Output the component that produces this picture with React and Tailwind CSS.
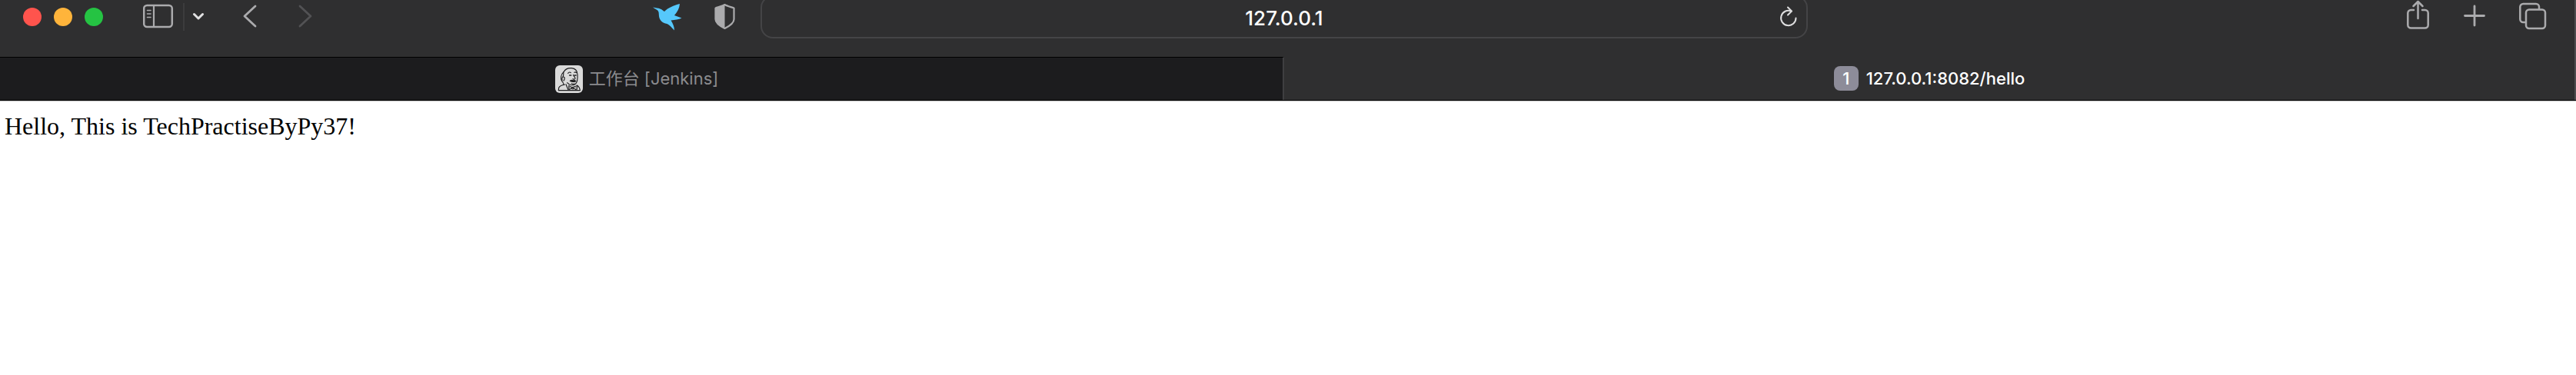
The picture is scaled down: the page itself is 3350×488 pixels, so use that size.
import React, { useState } from "react";

const iconColor = "text-[#ababad]";

function SidebarIcon() {
  return (
    <svg width="40" height="44" viewBox="0 0 40 44" fill="none" stroke="currentColor" strokeLinecap="round">
      <rect x="1.200" y="7" width="36.600" height="28" rx="4" strokeWidth="2.500" />
      <path d="M14 7v28" strokeWidth="2.200" />
      <path d="M5.500 13.500h4.500M5.500 18h4.500M5.500 22.500h4.500" strokeWidth="1.600" />
    </svg>
  );
}

function ShareIcon() {
  return (
    <svg width="30" height="44" viewBox="0 0 30 44" fill="none" stroke="currentColor" strokeWidth="2.500" strokeLinecap="round" strokeLinejoin="round">
      <path d="M9 13H5.300a4 4 0 0 0-4 4v15.500a4 4 0 0 0 4 4h18.400a4 4 0 0 0 4-4V17a4 4 0 0 0-4-4H20" />
      <path d="M14.500 24V2.500M8.500 8l6-6 6 6" />
    </svg>
  );
}

function TabsIcon() {
  return (
    <svg width="36" height="44" viewBox="0 0 36 44" fill="none" stroke="currentColor" strokeWidth="2.500">
      <rect x="9" y="12.500" width="25" height="24.500" rx="4" />
      <path d="M9 29H5.300a4 4 0 0 1-4-4V9a4 4 0 0 1 4-4h16.700a4 4 0 0 1 4 4v3.500" />
    </svg>
  );
}

function BirdIcon() {
  return (
    <svg width="38" height="44" viewBox="0 0 38 44" fill="#56c8fb">
      <path d="M0 9.500c4 1 7 .8 9.500 2 2.500 1 4 2.800 5.500 3.500C20 10 27 7 35 5c-.5 6-3 10.500-7 15l9.500 3.500c-4 2-8.500 2.500-14 3 2.500 4 4.500 8 4.500 13-3.500-3.500-6-7-9.500-8.500-6.500-1-10-5-10.500-10-.3-3 0-5.500-1.500-7.200C4.800 12 2.500 11.500 0 9.500z" />
    </svg>
  );
}

function ShieldIcon() {
  return (
    <svg width="28" height="44" viewBox="0 0 28 44">
      <path d="M13.500 6C10.500 8 6 9 1.500 10.500V25c0 5.500 6 9 12 12 6-3 12-6.500 12-12V10.500C21.500 9 16.500 8 13.500 6z" fill="none" stroke="currentColor" strokeWidth="2.200" strokeLinejoin="round" />
      <path d="M13.500 6C10.500 8 6 9 1.500 10.500V25c0 5.500 6 9 12 12z" fill="currentColor" />
    </svg>
  );
}

function JenkinsIcon() {
  return (
    <svg width="36" height="36" viewBox="0 0 108 108" fill="none" stroke="#1d1d1f" strokeWidth="3.500" strokeLinecap="round" strokeLinejoin="round">
      <rect width="108" height="108" rx="18" fill="#dadada" stroke="none" />
      <path d="M34 76c-2-8-4-11-8-15-6-10-4-25 7-35 6-11 17-16 31-15 15 1 22 11 23 25 1 16 1 27-7 36-9 8-24 7-33-4" />
      <path d="M33 26c-2 8 1 13-3 19M27 58c-1-8 0-13 5-13 7 0 5 11 1 15" />
      <path d="M50 31c4-5 8-5 11-2M75 28c3-2 6-1 8 1M71 37c1 7 9 11 7 15-1 3-6 3-9 1" />
      <path d="M56 39h6M76 39h5" strokeWidth="5" />
      <path d="M58 61c4-4 9-4 12-1 4-2 8-1 10 2-6 3-15 3-22-1z" fill="#1d1d1f" />
      <path d="M64 71c4 2 8 2 11 1M37 75c-11 2-20 6-23 13l-1 10h84c-1-9-4-15-12-20M42 74l9 22" />
      <path d="M53 80l1 16 13-8 17 9 3-18-20 7z" fill="#a5a5a5" strokeWidth="3" />
      <path d="M66 85l6 1-1 7-6-1z" strokeWidth="3" />
    </svg>
  );
}

export default function App() {
  const [address, setAddress] = useState("127.0.0.1");

  return (
    <div className="min-h-screen bg-white">
      <header className="overflow-hidden border-b border-black bg-[#2f2f30] font-['Inter','Noto_Sans_CJK_SC',sans-serif]">
        <div className="border-r-2 border-[#4c4c4e]">
          {/* Toolbar */}
          <div className={`grid h-[74px] grid-cols-[989fr_1362fr_997fr] items-start ${iconColor}`}>
            <div className="flex h-11 items-center pl-[30px] pr-8">
              <div className="flex gap-4">
                <button aria-label="Close" className="size-6 rounded-full bg-[#ff544d]" />
                <button aria-label="Minimize" className="size-6 rounded-full bg-[#ffb43b]" />
                <button aria-label="Zoom" className="size-6 rounded-full bg-[#25c343]" />
              </div>
              <button aria-label="Sidebar" className="ml-[52px]">
                <SidebarIcon />
              </button>
              <span className="ml-3 h-9 w-[2px] bg-[#3c3c3d]" />
              <button aria-label="Tab groups" className="ml-2 text-[#e2e2e3]">
                <svg width="20" height="44" viewBox="0 0 20 44" fill="none" stroke="currentColor" strokeWidth="3" strokeLinecap="round" strokeLinejoin="round">
                  <path d="M4.500 18.500l5.500 5.500 5.500-5.500" />
                </svg>
              </button>
              <button aria-label="Back" className="ml-12">
                <svg width="20" height="44" viewBox="0 0 20 44" fill="none" stroke="currentColor" strokeWidth="2.800" strokeLinecap="round" strokeLinejoin="round">
                  <path d="M16 8L2 21l14 13" />
                </svg>
              </button>
              <button aria-label="Forward" disabled className="ml-[52px] text-[#525254]">
                <svg width="20" height="44" viewBox="0 0 20 44" fill="none" stroke="currentColor" strokeWidth="2.800" strokeLinecap="round" strokeLinejoin="round">
                  <path d="M2 8l14 13L2 34" />
                </svg>
              </button>
              <button aria-label="Bird extension" className="ml-auto">
                <BirdIcon />
              </button>
              <button aria-label="Privacy report" className="ml-[42px]">
                <ShieldIcon />
              </button>
            </div>

            <div className="-mt-[6px] flex h-14 items-center rounded-2xl border-2 border-[#444446] pr-2">
              <input
                aria-label="Address"
                value={address}
                onChange={(e) => setAddress(e.target.value)}
                className="h-full min-w-0 flex-1 bg-transparent pt-[2px] pl-9 text-center text-[26px] font-medium text-white outline-none"
              />
              <button aria-label="Reload" className="text-[#dededf]">
                <svg width="28" height="44" viewBox="0 0 28 44" fill="none" stroke="currentColor" strokeWidth="2" strokeLinecap="round" strokeLinejoin="round">
                  <path d="M22.500 23.500A9.700 9.700 0 1 1 16.500 14.500" />
                  <path d="M12 9.500l5 5-5 5" />
                </svg>
              </button>
            </div>

            <div className="flex h-11 items-center justify-end gap-11 pr-9">
              <button aria-label="Share">
                <ShareIcon />
              </button>
              <button aria-label="New tab">
                <svg width="28" height="44" viewBox="0 0 28 44" fill="none" stroke="currentColor" strokeWidth="2.800" strokeLinecap="round">
                  <path d="M1.500 20.500h25M14 8v25" />
                </svg>
              </button>
              <button aria-label="Tab overview">
                <TabsIcon />
              </button>
            </div>
          </div>

          {/* Tabs */}
          <nav className="grid h-14 grid-cols-[1670fr_1678fr] text-[22px]">
            <button className="flex items-center justify-center gap-2 border-t border-r-2 border-t-black border-r-[#3f3f41] bg-[#1c1c1e] pr-3 text-[#8b8b8e]">
              <JenkinsIcon />
              <span>工作台 [Jenkins]</span>
            </button>
            <button className="flex items-center justify-center gap-[10px] font-medium text-white">
              <span className="flex size-8 items-center justify-center rounded-lg bg-[#8d8c99]">1</span>
              <span>127.0.0.1:8082/hello</span>
            </button>
          </nav>
        </div>
      </header>

      <main className="border-t border-[#c4c4c4] px-[6px] py-3 font-['Liberation_Serif',serif] text-[32px] leading-10 text-black">
        Hello, This is TechPractiseByPy37!
      </main>
    </div>
  );
}
